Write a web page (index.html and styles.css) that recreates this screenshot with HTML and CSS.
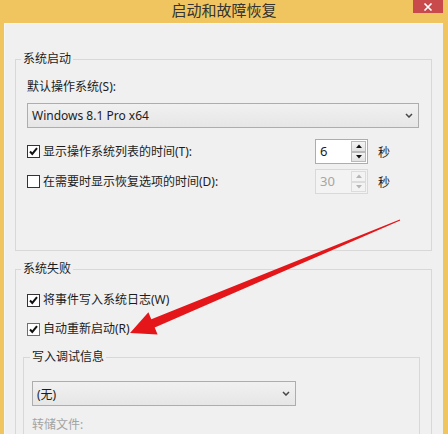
FILE: index.html
```html
<!DOCTYPE html>
<html lang="zh-CN">
<head>
<meta charset="utf-8">
<title>启动和故障恢复</title>
<link rel="stylesheet" href="styles.css">
</head>
<body>
<div class="window">
  <header class="titlebar">
    <span class="title">启动和故障恢复</span>
  </header>
  <main class="client">
    <fieldset class="group g1">
      <legend>系统启动</legend>
      <div class="label">默认操作系统(S):</div>
      <div class="select wide"><span>Windows 8.1 Pro x64</span><svg class="chev" width="8" height="5" viewBox="0 0 8 5"><path d="M1 1 L4 4 L7 1" stroke="#474747" stroke-width="1.5" fill="none"/></svg></div>
      <div class="row r1">
        <label class="check"><span class="box"><svg width="11" height="11" viewBox="0 0 11 11"><path d="M2 5.5 L4.3 8 L9 2.2" stroke="#111" stroke-width="2" fill="none"/></svg></span>显示操作系统列表的时间(T):</label>
        <div class="spin"><span class="val">6</span><span class="btns"><span class="btn"><svg width="6" height="4" viewBox="0 0 6 4"><path d="M0 4 L3 0.5 L6 4Z" fill="#111"/></svg></span><span class="btn"><svg width="6" height="4" viewBox="0 0 6 4"><path d="M0 0 L3 3.5 L6 0Z" fill="#111"/></svg></span></span></div>
        <span class="unit">秒</span>
      </div>
      <div class="row r2">
        <label class="check"><span class="box"></span>在需要时显示恢复选项的时间(D):</label>
        <div class="spin disabled"><span class="val">30</span><span class="btns"><span class="btn"><svg width="6" height="4" viewBox="0 0 6 4"><path d="M0 4 L3 0.5 L6 4Z" fill="#b5b5b5"/></svg></span><span class="btn"><svg width="6" height="4" viewBox="0 0 6 4"><path d="M0 0 L3 3.5 L6 0Z" fill="#b5b5b5"/></svg></span></span></div>
        <span class="unit">秒</span>
      </div>
    </fieldset>
    <fieldset class="group g2">
      <legend>系统失败</legend>
      <label class="check"><span class="box"><svg width="11" height="11" viewBox="0 0 11 11"><path d="M2 5.5 L4.3 8 L9 2.2" stroke="#111" stroke-width="2" fill="none"/></svg></span>将事件写入系统日志(W)</label>
      <label class="check c2"><span class="box focus"><svg width="11" height="11" viewBox="0 0 11 11"><path d="M2 5.5 L4.3 8 L9 2.2" stroke="#111" stroke-width="2" fill="none"/></svg></span>自动重新启动(R)</label>
      <fieldset class="sub">
        <legend>写入调试信息</legend>
        <div class="select narrow"><span>(无)</span><svg class="chev" width="8" height="5" viewBox="0 0 8 5"><path d="M1 1 L4 4 L7 1" stroke="#474747" stroke-width="1.5" fill="none"/></svg></div>
        <div class="dim">转储文件:</div>
      </fieldset>
    </fieldset>
  </main>
  <svg class="arrow" width="280" height="125" viewBox="125 213 280 125">
    <polygon points="399.8,219.4 151.3,319.2 148.4,312.2 130,333 157.6,334.4 154.7,327.5 400.2,220.6" fill="#e4161a"/>
  </svg>
</div>
<div class="close"><svg width="10" height="8" viewBox="0 0 10 8"><path d="M1.5 0.5 L8.5 7.5 M8.5 0.5 L1.5 7.5" stroke="#ffffff" stroke-width="1.6" fill="none"/></svg></div>
</body>
</html>
```
FILE: styles.css
```css
html, body {
  margin: 0;
  padding: 0;
}

body {
  width: 448px;
  height: 434px;
  overflow: hidden;
  background: #f0c55f;
  font-family: "Noto Sans", "Noto Sans CJK SC", sans-serif;
  font-size: 12px;
  color: #1c1c1c;
}

.window {
  position: relative;
  width: 448px;
  height: 434px;
  display: flex;
  flex-direction: column;
}

.titlebar {
  height: 23px;
  flex: none;
  display: flex;
  justify-content: center;
  align-items: flex-start;
}

.title {
  padding-top: 1px;
  font-family: "Noto Sans CJK SC", sans-serif;
  font-size: 15px;
  line-height: 17px;
  color: #333333;
}

.close {
  position: fixed;
  top: 0;
  right: 5px;
  z-index: 100;
  width: 30px;
  height: 13px;
  background-color: #c84a4a;
  display: flex;
  align-items: center;
  justify-content: center;
}

.client {
  flex: 1;
  min-height: 0;
  margin: 0 5px 0 4px;
  background: #f0f0f0;
  overflow: hidden;
  padding-top: 28px;
  box-sizing: border-box;
  border-top: 1px solid #f6f6f6;
  border-left: 1px solid #f6f6f6;
}

fieldset {
  min-width: 0;
}

.group {
  margin: -1px 0 0 10px;
  width: 417px;
  box-sizing: border-box;
  border: 1px solid #d8d8d8;
  padding: 12px 12px 56px 11px;
}

.group > legend {
  padding: 0 2px;
  margin-left: -6px;
  line-height: 16px;
}

.g2 {
  margin-top: 10px;
  padding-top: 15px;
  padding-bottom: 20px;
}

.label {
  line-height: 16px;
}

.select {
  height: 25px;
  box-sizing: border-box;
  border: 1px solid #adadad;
  background: linear-gradient(#f1f1f1, #e6e6e6);
  display: flex;
  align-items: center;
  justify-content: space-between;
  padding: 0 5px 0 4px;
}

.wide {
  margin-top: 8px;
}

.narrow {
  width: 264px;
}

.row {
  display: grid;
  grid-template-columns: 288px 53px auto;
  align-items: center;
}

.r1 {
  margin-top: 11px;
}

.r2 {
  margin-top: 5px;
}

.check {
  display: flex;
  align-items: center;
  gap: 3px;
  line-height: 16px;
}

.c2 {
  margin-top: 13px;
}

.box {
  width: 13px;
  height: 13px;
  box-sizing: border-box;
  border: 1px solid #333;
  background: #fff;
  display: flex;
  align-items: center;
  justify-content: center;
}

.box.focus {
  border-color: #3d7ab8;
}

.spin {
  height: 25px;
  box-sizing: border-box;
  border: 1px solid #abadb3;
  background: #fff;
  display: flex;
}

.spin .val {
  flex: 1;
  padding-left: 4px;
  line-height: 22px;
  font-size: 13px;
}

.btns {
  width: 15px;
  margin: 1px 1px 1px 0;
  display: flex;
  flex-direction: column;
}

.btn {
  flex: 1;
  box-sizing: border-box;
  border: 1px solid #b9b9b9;
  background: linear-gradient(#f4f4f4, #e2e2e2);
  display: flex;
  align-items: center;
  justify-content: center;
}

.spin.disabled {
  border-color: #d9d9d9;
  background: #f3f3f3;
}

.spin.disabled .val {
  color: #a6a6a6;
}

.spin.disabled .btn {
  border-color: #dcdcdc;
  background: #f3f3f3;
}

.unit {
  margin-left: 10px;
  font-family: "Noto Sans CJK SC", sans-serif;
}

.sub {
  margin: 12px -1px 0 -4px;
  border: 1px solid #d8d8d8;
  padding: 16px 8px 20px 8px;
}

.sub > legend {
  padding: 0 2px;
  margin-left: -2px;
  line-height: 16px;
}

.dim {
  margin-top: 11px;
  line-height: 16px;
  color: #a3a3a3;
}

.arrow {
  position: absolute;
  left: 125px;
  top: 213px;
  pointer-events: none;
}
```
